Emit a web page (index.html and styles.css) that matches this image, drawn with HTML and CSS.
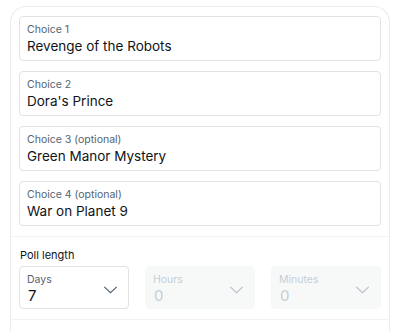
FILE: index.html
```html
<!DOCTYPE html>
<html lang="en">
<head>
  <meta charset="UTF-8" />
  <meta name="viewport" content="width=device-width, initial-scale=1" />
  <title>Poll</title>
  <link rel="stylesheet" href="styles.css">
</head>
<body>
  <div class="poll-card">
    <div class="choices">
      <div class="field">
        <span class="field-label">Choice 1</span>
        <span class="field-value">Revenge of the Robots</span>
      </div>
      <div class="field">
        <span class="field-label">Choice 2</span>
        <span class="field-value">Dora's Prince</span>
      </div>
      <div class="field">
        <span class="field-label">Choice 3 (optional)</span>
        <span class="field-value">Green Manor Mystery</span>
      </div>
      <div class="field">
        <span class="field-label">Choice 4 (optional)</span>
        <span class="field-value">War on Planet 9</span>
      </div>
    </div>

    <div class="poll-length">
      <div class="section-title">Poll length</div>
      <div class="selects">
        <div class="select">
          <div class="select-text">
            <span class="field-label">Days</span>
            <span class="select-value">7</span>
          </div>
          <svg class="chevron" viewBox="0 0 16 9" width="15" height="8"><path d="M1 1l7 6.5L15 1" fill="none" stroke="currentColor" stroke-width="1.4"/></svg>
        </div>
        <div class="select disabled">
          <div class="select-text">
            <span class="field-label">Hours</span>
            <span class="select-value">0</span>
          </div>
          <svg class="chevron" viewBox="0 0 16 9" width="15" height="8"><path d="M1 1l7 6.5L15 1" fill="none" stroke="currentColor" stroke-width="1.4"/></svg>
        </div>
        <div class="select disabled">
          <div class="select-text">
            <span class="field-label">Minutes</span>
            <span class="select-value">0</span>
          </div>
          <svg class="chevron" viewBox="0 0 16 9" width="15" height="8"><path d="M1 1l7 6.5L15 1" fill="none" stroke="currentColor" stroke-width="1.4"/></svg>
        </div>
      </div>
    </div>
  </div>
</body>
</html>
```

FILE: styles.css
```css
body {
  margin: 0;
  padding: 6px 0 0 10px;
  background: #fff;
  color: #0f1419;
  font-family: Inter, 'Noto Sans', sans-serif;
  overflow: hidden;
}

.poll-card {
  width: 378px;
  height: 324px;
  border: 1px solid #e6ecef;
  border-bottom: 0;
  border-radius: 16px 16px 0 0;
}

.choices {
  display: flex;
  flex-direction: column;
  gap: 10px;
  padding: 9px 8px 10px;
  border-bottom: 1px solid #eff3f4;
}

.field {
  height: 45px;
  box-sizing: border-box;
  border: 1px solid #dde3e6;
  border-radius: 4px;
  padding: 6px 7px 4px;
  display: flex;
  flex-direction: column;
}

.field-label {
  font-size: 10.5px;
  line-height: 13px;
  color: #536471;
}

.field-value {
  font-size: 13.5px;
  line-height: 20px;
  color: #0f1419;
}

.poll-length {
  padding: 11px 8px 10px;
  border-bottom: 1px solid #eff3f4;
}

.section-title {
  font-size: 11px;
  line-height: 15px;
  margin: 0 0 3px 1px;
}

.selects {
  display: flex;
  gap: 16px;
}

.select {
  flex: 1;
  height: 43px;
  box-sizing: border-box;
  border: 1px solid #dde3e6;
  border-radius: 4px;
  padding: 6px 10px 2px 7px;
  display: flex;
  align-items: center;
  justify-content: space-between;
}

.select-text {
  display: flex;
  flex-direction: column;
  align-self: stretch;
}

.select-value {
  font-size: 15px;
  line-height: 20px;
  padding-left: 1px;
}

.chevron {
  color: #536471;
  margin-top: 1px;
}

.select.disabled {
  background: #f7f9f9;
  border-color: #f7f9f9;
}

.select.disabled .field-label,
.select.disabled .select-value {
  color: #c4cfd6;
}

.select.disabled .chevron {
  color: #b6c2ca;
}
```
